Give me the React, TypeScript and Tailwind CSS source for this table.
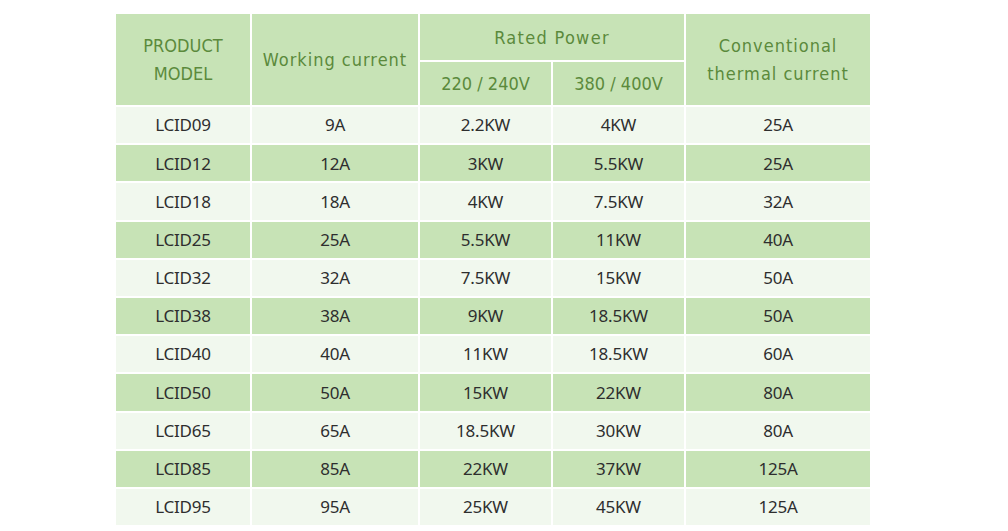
import React from 'react';

const rows: [string, string, string, string, string][] = [
  ['LCID09', '9A', '2.2KW', '4KW', '25A'],
  ['LCID12', '12A', '3KW', '5.5KW', '25A'],
  ['LCID18', '18A', '4KW', '7.5KW', '32A'],
  ['LCID25', '25A', '5.5KW', '11KW', '40A'],
  ['LCID32', '32A', '7.5KW', '15KW', '50A'],
  ['LCID38', '38A', '9KW', '18.5KW', '50A'],
  ['LCID40', '40A', '11KW', '18.5KW', '60A'],
  ['LCID50', '50A', '15KW', '22KW', '80A'],
  ['LCID65', '65A', '18.5KW', '30KW', '80A'],
  ['LCID85', '85A', '22KW', '37KW', '125A'],
  ['LCID95', '95A', '25KW', '45KW', '125A'],
];

const head = "flex items-center justify-center text-center bg-[#c7e3b6] text-[#5b8a3c] text-[18px] leading-[28px] [font-family:'DejaVu_Sans_Condensed','DejaVu_Sans',sans-serif]";

export default function App() {
  return (
    <div className="w-[1008px] h-[531px] bg-white pt-[14px] pl-[116px]">
      <div className="grid grid-cols-[134px_166px_131px_131px_184px] gap-[2px] w-[754px] grid-rows-[46px_43px_repeat(11,36.2px)]">
        <div className={`${head} row-span-2`}>PRODUCT<br />MODEL</div>
        <div className={`${head} row-span-2 tracking-[1px]`}>Working current</div>
        <div className={`${head} col-span-2 pt-[2px] tracking-[1.3px]`}>Rated Power</div>
        <div className={`${head} row-span-2 tracking-[1px]`}>Conventional<br />thermal current</div>
        <div className={head}>220 / 240V</div>
        <div className={head}>380 / 400V</div>
        {rows.map((r, i) =>
          r.map((c, j) => (
            <div
              key={`${i}-${j}`}
              className={`flex items-center justify-center text-[17px] tracking-[-0.2px] text-[#2e2e2e] [font-family:'Noto_Sans',sans-serif] ${i % 2 === 0 ? 'bg-[#f1f8ee]' : 'bg-[#c7e3b6]'}`}
            >
              {c}
            </div>
          ))
        )}
      </div>
    </div>
  );
}
